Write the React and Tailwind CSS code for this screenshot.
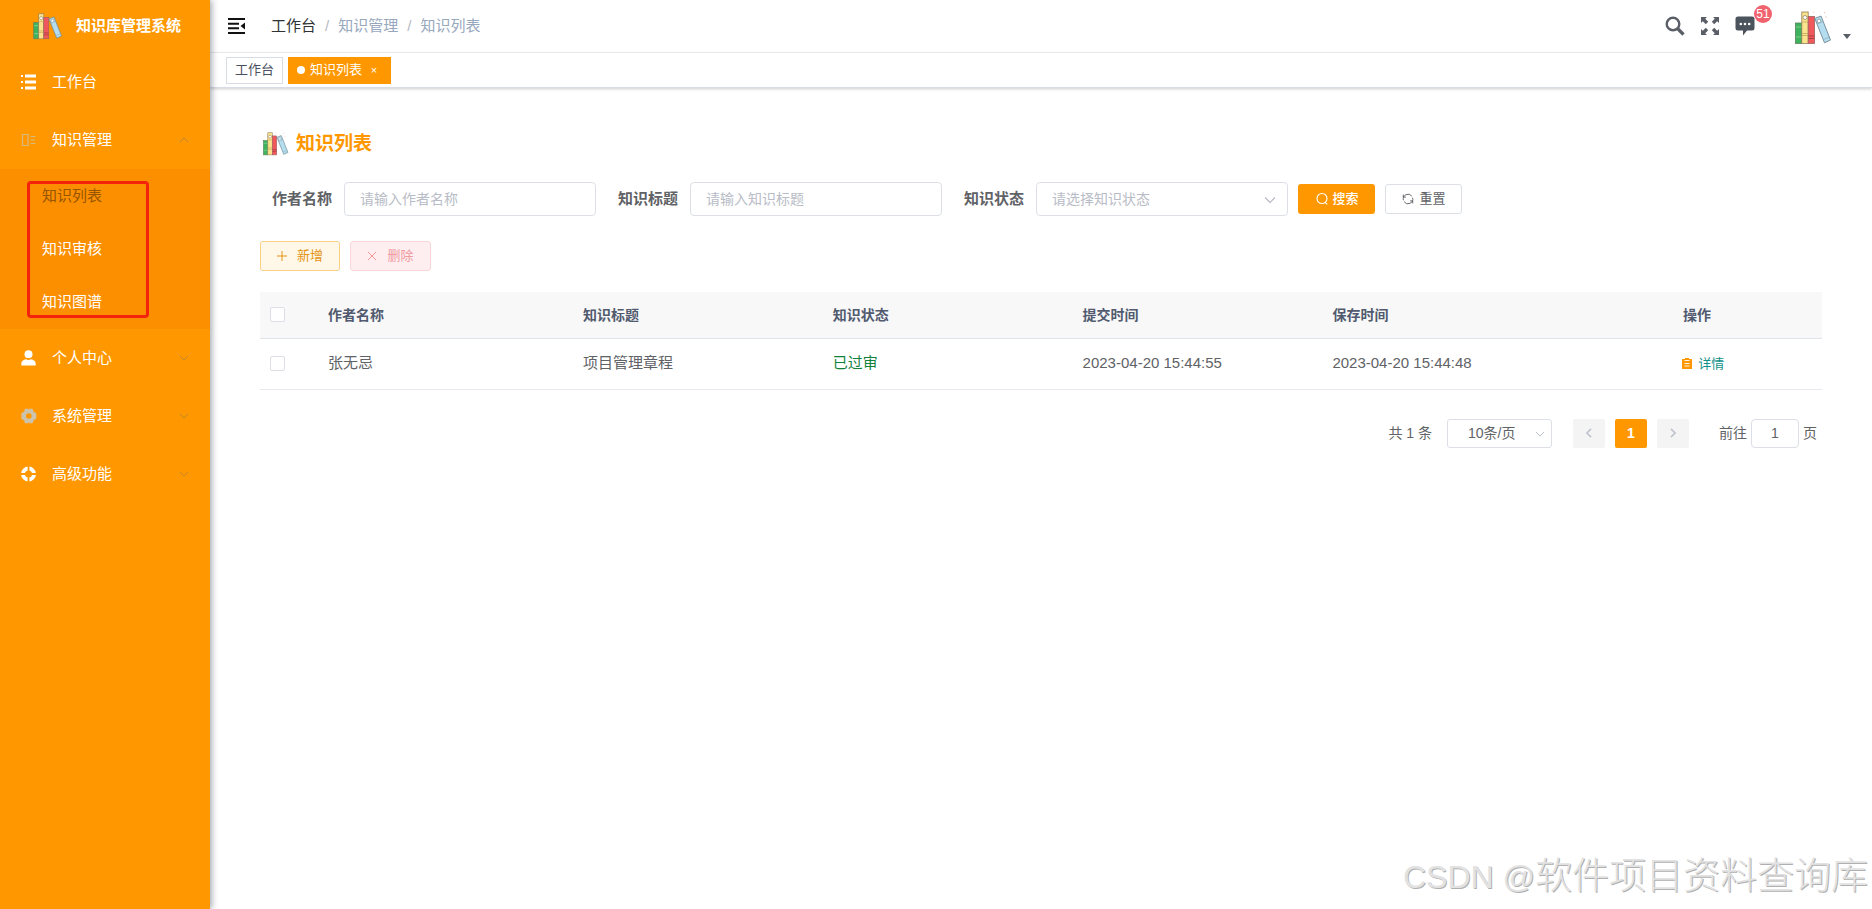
import { useState } from "react";
import clsx from "clsx";

const Books = ({ className }) => (
  <svg viewBox="0 0 37 34" className={className} aria-hidden="true">
    <rect x="0.5" y="12" width="6.500" height="20.500" fill="#3cb35c" stroke="#5d7f5b" strokeWidth="0.8" />
    <path d="M1 16h5.500M1 26h5.500" stroke="#7fce92" strokeWidth="1.200" />
    <rect x="6.800" y="1" width="6.400" height="31.500" fill="#fbe28c" stroke="#8f7f55" strokeWidth="0.8" />
    <path d="M7 11h6M7 22.500h6M7 24.500h6" stroke="#c2a660" strokeWidth="0.8" />
    <circle cx="10" cy="6.500" r="2" fill="#fff" stroke="#8a7c5c" strokeWidth="0.7" />
    <rect x="13.200" y="5.500" width="6.300" height="27" fill="#f0585c" stroke="#9c6260" strokeWidth="0.8" />
    <path d="M13.500 25h6M13.500 27.500h6" stroke="#a33c40" strokeWidth="0.9" />
    <path d="M19.800 7.500 26 5 35.500 29 29.500 31.800Z" fill="#b4def0" stroke="#6f8794" strokeWidth="0.9" />
    <path d="M28.500 28.500 34.500 26M22 13l6-2.500" stroke="#86aec0" strokeWidth="0.7" />
    <circle cx="24" cy="10" r="1.900" fill="#fff" stroke="#6f8794" strokeWidth="0.7" />
    <path d="M18 .8l.8.8M29 2l1-1M30.500 6h1.200" stroke="#f0a08c" strokeWidth="0.8" />
  </svg>
);

const Chevron = ({ className, up }) => (
  <svg viewBox="0 0 12 12" className={className} fill="none" stroke="currentColor" strokeWidth="1.1" aria-hidden="true">
    <path d={up ? "M1 8.500 6 3.500l5 5" : "M1 3.500l5 5 5-5"} />
  </svg>
);

const menuIcons = {
  list: (
    <svg viewBox="0 0 16 16" className="size-4 text-white" fill="currentColor">
      <path d="M0 1h2v2H0zM4 .5h11v3H4zM0 7h2v2H0zM4 6.500h11v3H4zM0 13h2v2H0zM4 12.500h11v3H4z" />
    </svg>
  ),
  component: (
    <svg viewBox="0 0 16 16" className="size-4 text-[#d8b984]" fill="none" stroke="currentColor" strokeWidth="1.200">
      <path d="M1.500 2.500h5.500v11H1.500zM9.500 4.500h5M9.500 8h4.500M9.500 11.500h5" />
    </svg>
  ),
  user: (
    <svg viewBox="0 0 16 16" className="size-4 text-white" fill="currentColor">
      <ellipse cx="7.500" cy="4.200" rx="4" ry="3.900" />
      <path d="M.3 15.500v-2c0-2.300 2-4 4.700-4.300 1.600 1 3.400 1 5 0 2.700.3 4.700 2 4.700 4.300v2z" />
    </svg>
  ),
  gear: (
    <svg viewBox="0 0 16 16" className="size-4 text-[#cbc3ae]" fill="currentColor">
      <path
        fillRule="evenodd"
        d="M4 .8h3l.8 1.200.8-1.200h3l1 3.200 1.900.4 1.200 2.600L14.600 8l1.100 1-1.200 2.600-1.900.4-1 3.200h-3L7.800 14 7 15.200H4L3 12l-1.900-.4L0 9l1-1-1-1 1.100-2.600L3 4zM7.800 5.200a2.800 2.800 0 1 0 0 5.600 2.800 2.800 0 0 0 0-5.600z"
      />
    </svg>
  ),
  ring: (
    <svg viewBox="0 0 16 16" className="size-4 text-white" fill="none" stroke="currentColor" strokeWidth="4">
      <circle cx="7.500" cy="8" r="5.500" />
      <path d="M7.500 0v5M7.500 11v5M0 8h5M10 8h5" stroke="#ff9800" strokeWidth="1.800" />
    </svg>
  ),
};

const MENU = [
  { title: "工作台", icon: "list" },
  { title: "知识管理", icon: "component", open: true, children: ["知识列表", "知识审核", "知识图谱"] },
  { title: "个人中心", icon: "user", children: [] },
  { title: "系统管理", icon: "gear", children: [] },
  { title: "高级功能", icon: "ring", children: [] },
];

const ROWS = [
  { id: 1, author: "张无忌", title: "项目管理章程", status: "已过审", submitted: "2023-04-20 15:44:55", saved: "2023-04-20 15:44:48" },
];

function Sidebar() {
  return (
    <aside className="relative z-10 w-[210px] shrink-0 bg-[#ff9800] text-[15px] text-white shadow-[2px_0_6px_rgba(0,21,41,0.35)]">
      <a href="#" className="flex h-[53px] items-center gap-[13px] pl-[33px] font-bold">
        <Books className="h-[27px] w-[30px]" />
        知识库管理系统
      </a>
      <nav>
        {MENU.map((item) => (
          <div key={item.title}>
            <a href="#" className="flex h-[58px] items-center pr-[21px] pl-[21px]">
              {menuIcons[item.icon]}
              <span className="ml-[15px] flex-1">{item.title}</span>
              {item.children && <Chevron up={item.open} className="size-[10px] text-[#b98434]" />}
            </a>
            {item.open && (
              <div className="relative bg-[#fc8f00] pt-px">
                {item.children.map((child, i) => (
                  <a key={child} href="#" className={clsx("flex h-[53px] items-center pl-[42px]", i === 0 && "text-[#965500]")}>
                    {child}
                  </a>
                ))}
                <div className="pointer-events-none absolute top-3 left-[27px] h-[137px] w-[122px] rounded-sm border-3 border-[#f4240c]" />
              </div>
            )}
          </div>
        ))}
      </nav>
    </aside>
  );
}

function Navbar() {
  return (
    <header className="flex h-[53px] items-center border-b border-[#f0f0f0] pr-[21px] pl-[18px]">
      <button aria-label="收起菜单">
        <svg viewBox="0 0 17 16" className="h-4 w-[17px]" fill="#111">
          <path d="M0 0h17v2H0zM0 4.700h11v2H0zM0 9.300h11v2H0zM0 14h17v2H0zM17 4.500v7L12.500 8z" />
        </svg>
      </button>
      <nav className="ml-[26px] flex gap-[9px] text-[15px] text-[#97a8be]">
        <a href="#" className="text-[#303133]">工作台</a>
        <span className="text-[#b4b9c4]">/</span>
        <span>知识管理</span>
        <span className="text-[#b4b9c4]">/</span>
        <span>知识列表</span>
      </nav>
      <div className="ml-auto flex items-center text-[#5a5e66]">
        <button aria-label="搜索菜单">
          <svg viewBox="0 0 20 20" className="size-5" fill="none" stroke="currentColor">
            <circle cx="8" cy="8" r="6.300" strokeWidth="2.400" />
            <path d="m12.500 12.500 6 6" strokeWidth="3.200" />
          </svg>
        </button>
        <button aria-label="全屏" className="ml-[15px]">
          <svg viewBox="0 0 20 20" className="size-5" fill="currentColor">
            <path d="M1 1h6L5.200 2.800l3 3-2.400 2.400-3-3L1 7zM19 1v6l-1.800-1.800-3 3-2.400-2.400 3-3L13 1zM1 19v-6l1.800 1.800 3-3 2.400 2.400-3 3L7 19zM19 19h-6l1.800-1.800-3-3 2.400-2.400 3 3L19 13z" />
          </svg>
        </button>
        <button aria-label="消息" className="relative ml-[15px]">
          <svg viewBox="0 0 20 20" className="size-5">
            <path d="M3 .5h14a2.500 2.500 0 0 1 2.500 2.500v9a2.500 2.500 0 0 1-2.500 2.500h-5L8 19.500v-5H3A2.500 2.500 0 0 1 .5 12V3A2.500 2.500 0 0 1 3 .5z" fill="#4b535c" />
            <circle cx="5.800" cy="8" r="1.300" fill="#fff" />
            <circle cx="10" cy="8" r="1.300" fill="#fff" />
            <circle cx="14.200" cy="8" r="1.300" fill="#fff" />
          </svg>
          <span className="absolute -top-[11px] left-[19px] flex size-[18px] items-center justify-center rounded-full bg-[#f0626e] text-xs text-white">51</span>
        </button>
        <button aria-label="用户菜单" className="ml-10 flex items-end gap-[11px] pt-1">
          <Books className="h-[34px] w-[37px]" />
          <svg viewBox="0 0 8 5" className="mb-1.5 h-[5px] w-2" fill="currentColor">
            <path d="M0 0h8L4 5z" />
          </svg>
        </button>
      </div>
    </header>
  );
}

function TagsView() {
  return (
    <div className="flex h-[35px] items-center gap-[5px] border-b border-[#d8dce5] pl-4 text-[13px] shadow-[0_1px_3px_rgba(0,0,0,0.2)]">
      <a href="#" className="flex h-[27px] items-center border border-[#d8dce5] px-2 text-[#495060]">
        工作台
      </a>
      <div className="flex h-[27px] items-center bg-[#ff9800] pr-[13px] pl-[9px] text-white">
        <span className="mr-[5px] size-2 rounded-full bg-white" />
        知识列表
        <button aria-label="关闭" className="ml-2 w-2 text-[11px]">×</button>
      </div>
    </div>
  );
}

const field = "h-[34px] w-[252px] rounded border border-[#dcdfe6] bg-white px-[15px] text-sm placeholder:text-[#b8bcc6] outline-none";

function SearchForm() {
  const [status, setStatus] = useState("");
  return (
    <form className="mt-[23px] flex flex-wrap items-center gap-x-[22px] gap-y-3 pl-3 text-[15px] text-[#606266]" onSubmit={(e) => e.preventDefault()}>
      <div className="flex items-center gap-3">
        <label htmlFor="author" className="font-bold">作者名称</label>
        <input id="author" className={field} placeholder="请输入作者名称" />
      </div>
      <div className="flex items-center gap-3">
        <label htmlFor="title" className="font-bold">知识标题</label>
        <input id="title" className={field} placeholder="请输入知识标题" />
      </div>
      <div className="flex items-center gap-[10px] text-[13px]">
        <label htmlFor="status" className="mr-[2px] text-[15px] font-bold">知识状态</label>
        <div className="relative">
          <select
            id="status"
            value={status}
            onChange={(e) => setStatus(e.target.value)}
            className={clsx(field, "block appearance-none", !status && "text-[#b8bcc6]")}
          >
            <option value="">请选择知识状态</option>
            <option value="1">已过审</option>
          </select>
          <Chevron className="pointer-events-none absolute top-3 right-3 size-3 text-[#b4b8c0]" />
        </div>
        <button className="flex h-[30px] w-[77px] items-center justify-center gap-1 rounded-[3px] bg-[#ff9800] font-medium text-white">
          <svg viewBox="0 0 14 14" className="size-3.5" fill="none" stroke="currentColor" strokeWidth="1.100">
            <circle cx="7" cy="6.500" r="5" />
            <path d="m10.300 10.300 2 2.200" />
          </svg>
          搜索
        </button>
        <button type="reset" onClick={() => setStatus("")} className="flex h-[30px] w-[77px] items-center justify-center gap-1.5 rounded-[3px] border border-[#dcdfe6] bg-white">
          <svg viewBox="0 0 14 14" className="size-3" fill="none" stroke="currentColor" strokeWidth="1.100">
            <path d="M1.700 8.500A5.500 5.500 0 0 1 11.500 3.800M12.300 5.500A5.500 5.500 0 0 1 2.500 10.200M1.500 1.800v3h3M12.500 12.200v-3h-3" />
          </svg>
          重置
        </button>
      </div>
    </form>
  );
}

const checkbox = "block size-[15px] appearance-none rounded-xs border border-[#dcdfe6] bg-white checked:bg-[#ff9800]";

function KnowledgeTable() {
  return (
    <table className="mt-[21px] w-full table-fixed text-left text-[15px] text-[#606266]">
      <colgroup>
        <col className="w-[58px]" />
        <col className="w-[255px]" />
        <col />
        <col />
        <col />
        <col />
        <col />
      </colgroup>
      <thead className="bg-[#f8f8f9] text-sm text-[#515a6e]">
        <tr className="h-[46px] border-b border-[#dfe4ea]">
          <th className="pl-[10px]"><input type="checkbox" aria-label="全选" className={checkbox} /></th>
          <th className="px-[10px]">作者名称</th>
          <th className="px-[10px]">知识标题</th>
          <th className="px-[10px]">知识状态</th>
          <th className="px-[10px]">提交时间</th>
          <th className="px-[10px]">保存时间</th>
          <th className="px-[10px] text-center">操作</th>
        </tr>
      </thead>
      <tbody>
        {ROWS.map((row) => (
          <tr key={row.id} className="h-[51px] border-b border-[#e6e9f0]">
            <td className="pl-[10px]"><input type="checkbox" aria-label={row.title} className={checkbox} /></td>
            <td className="px-[10px]">{row.author}</td>
            <td className="px-[10px]">{row.title}</td>
            <td className="px-[10px] text-[#12813a]">{row.status}</td>
            <td className="px-[10px]">{row.submitted}</td>
            <td className="px-[10px]">{row.saved}</td>
            <td className="px-[10px]">
              <a href="#" className="ml-[100px] flex items-center gap-1.5 text-[13px] text-[#12908a]">
                <svg viewBox="0 0 10 11" className="h-[11px] w-[10px]">
                  <path d="M3 0h4v1h3v10H0V1h3z" fill="#ff9800" />
                  <path d="M2.500 2.500h5M2.500 5.500h5M2.500 8h5" stroke="#fff" strokeWidth="0.900" />
                </svg>
                详情
              </a>
            </td>
          </tr>
        ))}
      </tbody>
    </table>
  );
}

function Pagination() {
  return (
    <div className="mt-[29px] flex items-center justify-end pr-[5px] text-sm text-[#606266]">
      <span>共 1 条</span>
      <div className="relative ml-[15px]">
        <select aria-label="每页条数" className="block h-[29px] w-[105px] appearance-none rounded-[3px] border border-[#dcdfe6] bg-white pl-5">
          <option>10条/页</option>
          <option>20条/页</option>
        </select>
        <Chevron className="pointer-events-none absolute top-[10px] right-[7px] size-[10px] text-[#b4b8c0]" />
      </div>
      <div className="ml-[21px] flex gap-[10px]">
        <button aria-label="上一页" className="flex h-[29px] w-8 items-center justify-center rounded-xs bg-[#f4f4f5] text-[#c0c4cc]">
          <Chevron className="size-[10px] rotate-90 stroke-2" />
        </button>
        <button className="h-[29px] w-8 rounded-xs bg-[#ff9800] font-bold text-white">1</button>
        <button aria-label="下一页" className="flex h-[29px] w-8 items-center justify-center rounded-xs bg-[#f4f4f5] text-[#c0c4cc]">
          <Chevron className="size-[10px] -rotate-90 stroke-2" />
        </button>
      </div>
      <label className="ml-[30px] flex items-center gap-1">
        前往
        <input defaultValue="1" className="h-[29px] w-12 rounded border border-[#dcdfe6] text-center" />
        页
      </label>
    </div>
  );
}

export default function App() {
  return (
    <div className="relative flex min-h-screen bg-white font-['Liberation_Sans','Noto_Sans_CJK_SC',sans-serif]">
      <Sidebar />
      <div className="min-w-0 flex-1">
        <Navbar />
        <TagsView />
        <main className="px-[50px] pt-[41px]">
          <h1 className="flex h-[30px] items-center gap-[7px] pl-[3px] text-[19px] font-bold text-[#ff9800]">
            <Books className="h-6 w-[26px]" />
            知识列表
          </h1>
          <SearchForm />
          <div className="mt-[25px] flex gap-[10px] text-[13px]">
            <button className="flex h-[30px] w-20 items-center justify-center gap-[10px] rounded-[3px] border border-[#f8cf83] bg-[#fff8e8] text-[#e39413]">
              <svg viewBox="0 0 10 10" className="size-[10px]" stroke="currentColor"><path d="M5 0v10M0 5h10" /></svg>
              新增
            </button>
            <button className="flex h-[30px] w-[81px] items-center justify-center gap-[10px] rounded-[3px] border border-[#fbd5d9] bg-[#feeef0] text-[#f09a9f]">
              <svg viewBox="0 0 10 10" className="size-[10px]" stroke="currentColor"><path d="m1 1 8 8M9 1 1 9" /></svg>
              删除
            </button>
          </div>
          <KnowledgeTable />
          <Pagination />
        </main>
      </div>
      <div className="pointer-events-none absolute right-1 bottom-2 flex items-center text-[37px] leading-[48px] font-light whitespace-pre text-[#e2e2e2] [text-shadow:1px_1px_0_#b0b0b0]">
        <span className="text-[32px]">CSDN @</span>
        软件项目资料查询库
      </div>
    </div>
  );
}
